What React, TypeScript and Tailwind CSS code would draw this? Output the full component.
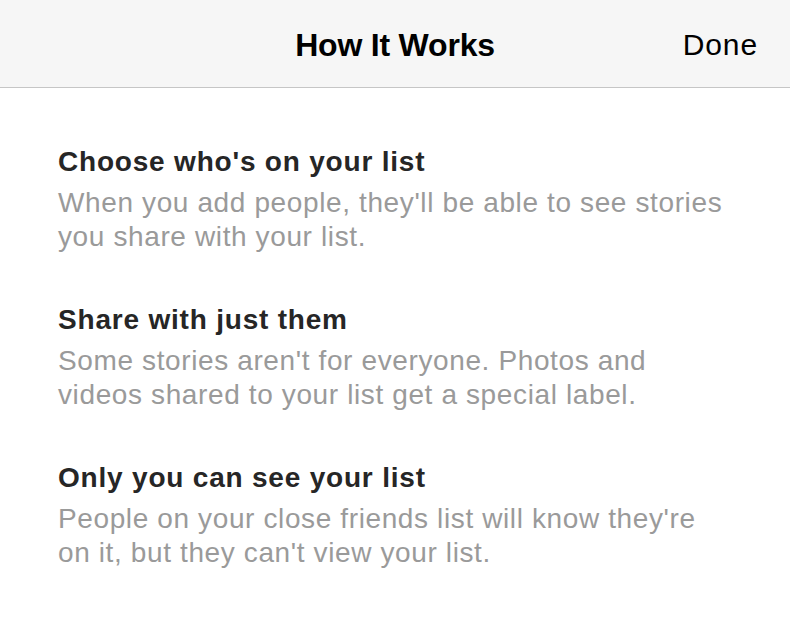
export default function App() {
  const items = [
    {
      t: "Choose who's on your list",
      d: ["When you add people, they'll be able to see stories", "you share with your list."],
    },
    {
      t: "Share with just them",
      d: ["Some stories aren't for everyone. Photos and", "videos shared to your list get a special label."],
    },
    {
      t: "Only you can see your list",
      d: ["People on your close friends list will know they're", "on it, but they can't view your list."],
    },
  ];
  return (
    <div
      className="w-[790px] h-[632px] bg-white overflow-hidden"
      style={{ fontFamily: '"Liberation Sans", Arial, sans-serif' }}
    >
      <div className="h-[88px] bg-[#f6f6f6] border-b border-[#c6c6c6] relative flex items-center justify-center">
        <span className="text-[32px] font-semibold text-black tracking-[-0.2px] leading-[40px] mt-[2px]">How It Works</span>
        <span className="absolute right-[32px] top-[25px] text-[30px] leading-[40px] text-black tracking-[0.9px]">Done</span>
      </div>
      <div className="pl-[58px] pt-[56px] flex flex-col gap-[48px]">
        {items.map((it) => (
          <div key={it.t} className="flex flex-col">
            <div className="text-[28px] leading-[36px] font-semibold text-[#262626] tracking-[0.8px]">{it.t}</div>
            <div className="text-[28px] leading-[34px] text-[#9a9a9a] mt-[6px] tracking-[0.62px]">
              {it.d.map((l) => (
                <div key={l} className="whitespace-nowrap">{l}</div>
              ))}
            </div>
          </div>
        ))}
      </div>
    </div>
  );
}
